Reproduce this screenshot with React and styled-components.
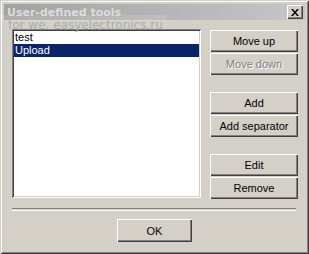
import React from 'react';
import styled, { createGlobalStyle } from 'styled-components';

const GlobalStyle = createGlobalStyle`
  html, body {
    margin: 0;
    padding: 0;
    background: #d4d0c8;
  }
  body {
    font-family: "Liberation Sans", Arial, sans-serif;
    font-size: 11px;
  }
`;

const items = ['test', 'Upload'];

const groups = [
  [{ label: 'Move up' }, { label: 'Move down', disabled: true }],
  [{ label: 'Add' }, { label: 'Add separator' }],
  [{ label: 'Edit' }, { label: 'Remove' }],
];

function App() {
  return (
    <>
      <GlobalStyle />
      <Window>
        <TitleBar>
          <Title>User-defined tools</Title>
          <CloseButton aria-label="Close">
            <svg width="8" height="7" viewBox="0 0 8 7">
              <path d="M0 0h2l2 2.5L6 0h2L5 3.5 8 7H6L4 4.5 2 7H0l3-3.5z" fill="#000" />
            </svg>
          </CloseButton>
        </TitleBar>
        <Body>
          <Main>
            <ListBox>
              {items.map((it, i) => (
                <Item key={it} selected={i === 1}>{it}</Item>
              ))}
            </ListBox>
            <ButtonColumn>
              {groups.map((g, i) => (
                <Group key={i}>
                  {g.map(b => (
                    <Button key={b.label} disabled={b.disabled}>{b.label}</Button>
                  ))}
                </Group>
              ))}
            </ButtonColumn>
          </Main>
          <Separator />
          <Footer>
            <Button wide>OK</Button>
          </Footer>
        </Body>
        <Watermark>for we. easyelectronics.ru</Watermark>
      </Window>
    </>
  );
}

const Window = styled.div`
  position: relative;
  box-sizing: border-box;
  width: 309px;
  height: 254px;
  padding: 4px;
  display: flex;
  flex-direction: column;
  background: #d4d0c8;
  box-shadow:
    inset 1px 1px 0 #d4d0c8,
    inset -1px -1px 0 #404040,
    inset 2px 2px 0 #ffffff,
    inset -2px -2px 0 #808080;
`;

const TitleBar = styled.div`
  height: 18px;
  display: flex;
  align-items: center;
  justify-content: space-between;
  padding: 0 2px 0 3px;
  background: linear-gradient(to right, #a2a2a2, #c6c6c6);
`;

const Title = styled.span`
  font-family: "DejaVu Sans", Tahoma, sans-serif;
  font-weight: bold;
  font-size: 11px;
  color: #dcdcdc;
`;

const CloseButton = styled.div`
  box-sizing: border-box;
  width: 16px;
  height: 14px;
  display: flex;
  align-items: center;
  justify-content: center;
  background: #d4d0c8;
  box-shadow:
    inset 1px 1px 0 #ffffff,
    inset -1px -1px 0 #404040,
    inset -2px -2px 0 #808080;
`;

const Body = styled.div`
  flex: 1;
  display: flex;
  flex-direction: column;
  padding: 9px 7px 8px 8px;
`;

const Main = styled.div`
  display: flex;
  gap: 9px;
`;

const ListBox = styled.div`
  box-sizing: border-box;
  width: 189px;
  height: 169px;
  padding: 2px;
  background: #ffffff;
  box-shadow:
    inset 1px 1px 0 #808080,
    inset -1px -1px 0 #ffffff,
    inset 2px 2px 0 #404040,
    inset -2px -2px 0 #d4d0c8;
`;

const Item = styled.div`
  height: 13px;
  line-height: 13px;
  padding-left: 1px;
  color: ${p => (p.selected ? '#ffffff' : '#000000')};
  background: ${p => (p.selected ? '#0a246a' : 'transparent')};
`;

const ButtonColumn = styled.div`
  display: flex;
  flex-direction: column;
  gap: 17px;
  padding-top: 1px;
`;

const Group = styled.div`
  display: flex;
  flex-direction: column;
  gap: 1px;
`;

const Button = styled.div`
  box-sizing: border-box;
  width: ${p => (p.wide ? '75px' : '88px')};
  height: ${p => (p.wide ? '23px' : '22px')};
  display: flex;
  align-items: center;
  justify-content: center;
  background: #d4d0c8;
  color: ${p => (p.disabled ? '#808080' : '#000000')};
  text-shadow: ${p => (p.disabled ? '1px 1px 0 #ffffff' : 'none')};
  box-shadow:
    inset 1px 1px 0 #ffffff,
    inset -1px -1px 0 #404040,
    inset -2px -2px 0 #808080;
`;

const Separator = styled.div`
  margin-top: 9px;
  margin-right: 2px;
  height: 1px;
  border-top: 1px solid #808080;
  border-bottom: 1px solid #ffffff;
`;

const Footer = styled.div`
  display: flex;
  justify-content: center;
  margin-top: 8px;
  padding-right: 1px;
`;

const Watermark = styled.div`
  position: absolute;
  left: 0;
  top: 15px;
  width: 167px;
  padding: 5px 0 0 8px;
  box-sizing: border-box;
  font-family: "DejaVu Sans", Verdana, sans-serif;
  font-size: 12px;
  line-height: 11px;
  color: #acacac;
  background: linear-gradient(rgba(255, 255, 255, 0.12) 6px, transparent 6px);
  white-space: nowrap;
  pointer-events: none;
`;

export default App;
